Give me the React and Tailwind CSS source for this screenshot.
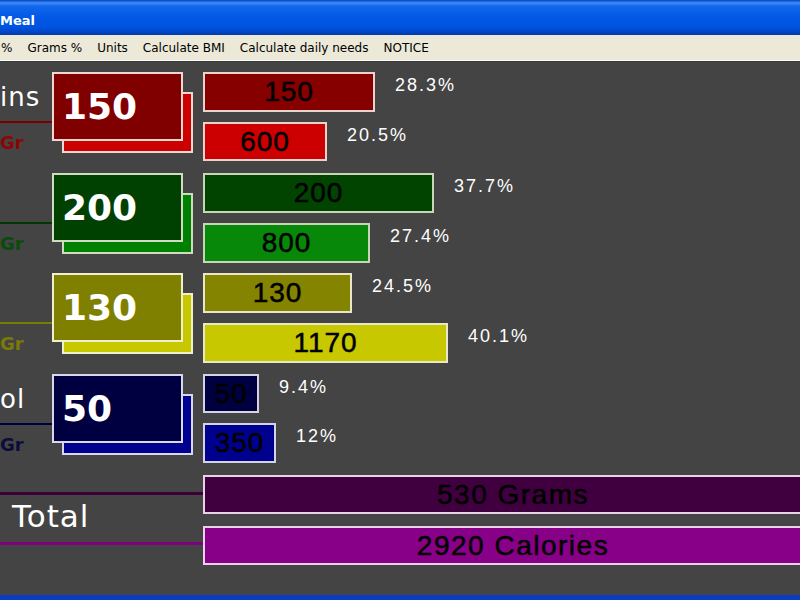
import React from "react";

const rows = [
  {
    label: "ins",
    num: "150",
    h: "h-[101px]",
    line: "bg-[#7a0000]",
    gr: "text-[#8a0606]",
    front: "bg-[#800000] border-[#f2d6d2]",
    back: "bg-[#cc0000] border-[#f2d6d2]",
    bars: [
      { w: 172, h: 40, text: "150", pct: "28.3%", cls: "bg-[#860000] border-[#ecd2cc]" },
      { w: 124, h: 39, text: "600", pct: "20.5%", cls: "bg-[#cc0000] border-[#ecd2cc]" },
    ],
  },
  {
    label: "",
    num: "200",
    h: "h-[100px]",
    line: "bg-[#003800]",
    gr: "text-[#0a4a0a]",
    front: "bg-[#004000] border-[#cfdcbf]",
    back: "bg-[#008000] border-[#cfdcbf]",
    bars: [
      { w: 231, h: 40, text: "200", pct: "37.7%", cls: "bg-[#004400] border-[#c8d6b8]" },
      { w: 167, h: 40, text: "800", pct: "27.4%", cls: "bg-[#088808] border-[#c8d6b8]" },
    ],
  },
  {
    label: "",
    num: "130",
    h: "h-[101px]",
    line: "bg-[#7c7c00]",
    gr: "text-[#7a7a08]",
    front: "bg-[#808000] border-[#f0f0cc]",
    back: "bg-[#c8c800] border-[#f0f0cc]",
    bars: [
      { w: 149, h: 40, text: "130", pct: "24.5%", cls: "bg-[#848400] border-[#e8e8c8]" },
      { w: 245, h: 40, text: "1170", pct: "40.1%", cls: "bg-[#c8c800] border-[#e8e8c8]" },
    ],
  },
  {
    label: "ol",
    num: "50",
    h: "h-[101px]",
    line: "bg-[#000040]",
    gr: "text-[#0c0c3a]",
    front: "bg-[#000040] border-[#d8d8ec]",
    back: "bg-[#000090] border-[#d8d8ec]",
    bars: [
      { w: 56, h: 39, text: "50", pct: "9.4%", cls: "bg-[#000040] border-[#d4d4e6]" },
      { w: 73, h: 40, text: "350", pct: "12%", cls: "bg-[#00008e] border-[#d4d4e6]" },
    ],
  },
];

function Bar({ w, h, text, cls, wide }) {
  return (
    <div
      className={`flex shrink-0 items-center justify-center overflow-hidden border-2 ${cls}`}
      style={{ width: w, height: h }}
    >
      <span
        className={`whitespace-nowrap font-['Liberation_Sans',Arial,sans-serif] text-[28px] leading-none text-black [-webkit-text-stroke:0.5px_#000] ${
          wide ? "tracking-[1.5px]" : "tracking-[1px]"
        }`}
      >
        {text}
      </span>
    </div>
  );
}

function NutrientRow({ row }) {
  return (
    <div className={`flex shrink-0 ${row.h}`}>
      {/* side label, connector line and unit */}
      <div className="flex w-[52px] shrink-0 flex-col">
        <div className="flex h-[49px] items-end pb-[11px]">
          <span className="font-['DejaVu_Sans',sans-serif] text-[26px] leading-none tracking-[1px] text-white">
            {row.label}
          </span>
        </div>
        <div className={`h-[2px] w-full ${row.line}`} />
        <div
          className={`mt-[11px] font-['DejaVu_Sans',sans-serif] text-[18px] font-bold leading-none ${row.gr}`}
        >
          Gr
        </div>
      </div>

      {/* stacked value cards */}
      <div className="grid w-[151px] shrink-0 content-start">
        <div
          className={`col-start-1 row-start-1 ml-[10px] mt-[20px] h-[61px] w-[131px] border-2 ${row.back}`}
        />
        <div
          className={`col-start-1 row-start-1 flex h-[69px] w-[131px] items-center border-2 pl-[8px] ${row.front}`}
        >
          <span className="font-['DejaVu_Sans',sans-serif] text-[36px] font-bold leading-none text-white">
            {row.num}
          </span>
        </div>
      </div>

      {/* grams / calories bars */}
      <div className="flex flex-col gap-[10px]">
        {row.bars.map((b, i) => (
          <div key={i} className="flex items-start">
            <Bar {...b} />
            <span className="ml-[20px] mt-[3px] font-['Liberation_Sans',Arial,sans-serif] text-[18px] leading-[20px] tracking-[2px] text-white">
              {b.pct}
            </span>
          </div>
        ))}
      </div>
    </div>
  );
}

export default function App() {
  const menu = ["Grams %", "Units", "Calculate BMI", "Calculate daily needs", "NOTICE"];
  return (
    <div className="flex h-[600px] w-[800px] flex-col overflow-hidden bg-[#444444]">
      {/* title bar */}
      <div className="flex h-[35px] shrink-0 items-center bg-[linear-gradient(to_bottom,#0842c0_0px,#3d8ff9_3px,#1466ec_6px,#0058e6_18px,#0054de_27px,#0048cc_31px,#003aa8_35px)]">
        <span className="mt-[5px] font-['DejaVu_Sans',sans-serif] text-[13px] font-bold leading-none text-white">
          Meal
        </span>
      </div>

      {/* menu bar */}
      <div className="flex h-[25px] shrink-0 items-center bg-[#ece9d8] pt-[1px] font-['DejaVu_Sans',sans-serif] text-[12px] text-black">
        <span className="ml-[1px]">%</span>
        {menu.map((m) => (
          <span key={m} className="ml-[15px]">
            {m}
          </span>
        ))}
      </div>
      <div className="h-[1px] shrink-0 bg-[#fbfaf5]" />
      <div className="h-[1px] shrink-0 bg-[#3a3a3a]" />

      {/* body */}
      <div className="flex flex-1 flex-col pt-[10px]">
        {rows.map((r) => (
          <NutrientRow key={r.num} row={r} />
        ))}

        {/* totals */}
        <div className="flex">
          <div className="flex w-[203px] shrink-0 flex-col">
            <div className="mt-[17px] h-[3px] w-full bg-[#3a003a]" />
            <div className="ml-[12px] mt-[6px] h-[41px] font-['DejaVu_Sans',sans-serif] text-[31px] leading-[31px] tracking-[1px] text-white">
              Total
            </div>
            <div className="h-[3px] w-full bg-[#800080]" />
          </div>
          <div className="flex flex-col gap-[12px]">
            <Bar w={620} h={39} text="530 Grams" cls="bg-[#400040] border-[#ead2e6]" wide />
            <Bar w={620} h={39} text="2920 Calories" cls="bg-[#880088] border-[#ead2e6]" wide />
          </div>
        </div>
      </div>

      {/* window frame bottom */}
      <div className="h-[5px] shrink-0 bg-[#0a3cc4]" />
    </div>
  );
}
